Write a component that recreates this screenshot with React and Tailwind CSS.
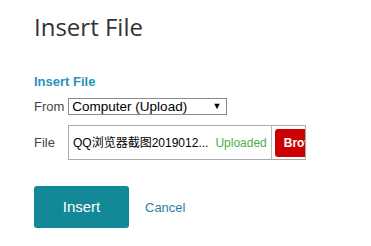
export default function App() {
  return (
    <div className="h-[246px] w-[371px] bg-white pl-[34px] pt-[10px] font-['Liberation_Sans',Arial,sans-serif] text-[#444]">
      <h1 className="font-['Open_Sans',sans-serif] text-[24px] leading-[34px] text-[#333]">Insert File</h1>

      <h2 className="mt-[30px] text-[13px] font-bold leading-[15px] text-[#2a93b8]">Insert File</h2>

      <div className="mt-[9px] flex items-center">
        <span className="text-[13px] leading-[16px] text-[#444]">From</span>
        <div className="ml-[4px] flex h-[17px] w-[159px] items-center justify-between border border-[#8a8a8a] bg-white pl-[3px] pr-[5px]">
          <span className="text-[13.5px] leading-[14px] text-black">Computer (Upload)</span>
          <span className="text-[9px] leading-none text-black">▼</span>
        </div>
      </div>

      <div className="mt-[10px] flex items-center">
        <span className="w-[34px] text-[13px] leading-[16px] text-[#444]">File</span>
        <div className="flex h-[35px] w-[238px] items-center overflow-hidden border border-[#aaa] bg-white">
          <span className="ml-[4px] whitespace-nowrap font-['Liberation_Sans','Noto_Sans_CJK_SC',sans-serif] text-[12px] text-black">
            QQ浏览器截图2019012...
          </span>
          <span className="ml-[7px] whitespace-nowrap text-[12px] text-[#4cae4c]">Uploaded</span>
          <div className="ml-[4px] h-full w-px shrink-0 bg-[#bbb]" />
          <div className="ml-[3px] flex h-[28px] w-[60px] shrink-0 items-center rounded-[3px] bg-[#cc0000] pl-[9px]">
            <span className="text-[12px] font-bold text-white">Browse</span>
          </div>
        </div>
      </div>

      <div className="mt-[26px] flex items-center">
        <button className="h-[42px] w-[95px] rounded-[3px] bg-[#138896] text-[15px] text-white">Insert</button>
        <span className="ml-[16px] mt-[2px] text-[13px] text-[#2a7fa6]">Cancel</span>
      </div>
    </div>
  );
}
